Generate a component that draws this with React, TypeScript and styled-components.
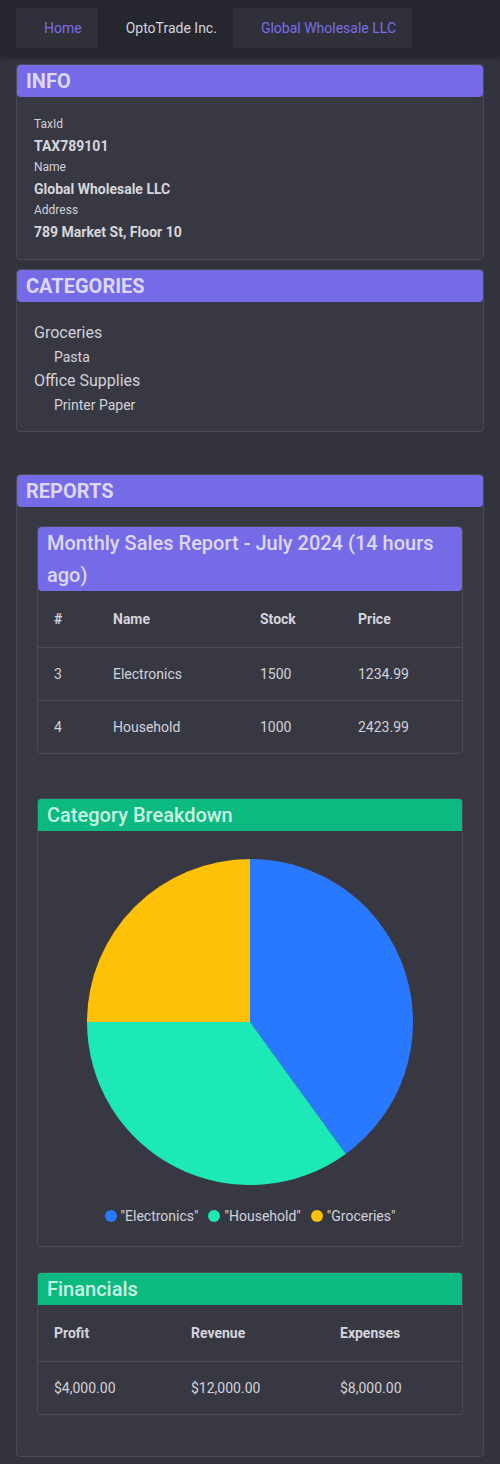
import React from "react";
import styled, { createGlobalStyle } from "styled-components";

const GlobalStyle = createGlobalStyle`
  html {
    overflow-x: hidden;
    background: #33333d;
  }
  body {
    margin: 0;
    background: #33333d;
    color: #d2d2da;
    font-family: Roboto, "Liberation Sans", sans-serif;
    font-size: 14px;
  }
  * { box-sizing: border-box; }
`;

const Nav = styled.nav`
  display: flex;
  align-items: stretch;
  height: 56px;
  padding: 8px 16px;
  background: #26262f;
  box-shadow: 0 2px 5px rgba(0, 0, 0, 0.35);
`;

const NavItem = styled.a<{ $boxed?: boolean; $link?: boolean }>`
  display: flex;
  align-items: center;
  padding: 0 16px 0 28px;
  font-size: 14px;
  text-decoration: none;
  background: ${(p) => (p.$boxed ? "#30303a" : "transparent")};
  color: ${(p) => (p.$link ? "#7a6ee8" : "#d4d4dc")};
`;

const Main = styled.main`
  padding: 8px 0 0;
`;

const Panel = styled.section<{ $gapAfter?: number }>`
  width: calc(100vw - 32px);
  margin: 0 16px ${(p) => p.$gapAfter ?? 9}px;
  background: #383842;
  border: 1px solid #4b4b55;
  border-radius: 4px;
`;

const PanelHeader = styled.h2`
  margin: 0;
  height: 32px;
  line-height: 32px;
  padding: 0 9px;
  background: #766be6;
  border-radius: 4px;
  color: #ddd8fa;
  font-size: 20px;
  font-weight: 700;
`;

const InfoBody = styled.dl`
  margin: 0;
  padding: 18px 17px 15px;
`;

const InfoLabel = styled.dt`
  font-size: 12px;
  line-height: 19px;
  color: #d0d0d8;
`;

const InfoValue = styled.dd`
  margin: 0;
  font-size: 14px;
  line-height: 24px;
  font-weight: 700;
  color: #d6d6de;
`;

const CatBody = styled.ul`
  list-style: none;
  margin: 0;
  padding: 19px 17px 14px;
`;

const CatItem = styled.li<{ $sub?: boolean }>`
  line-height: 24px;
  font-size: ${(p) => (p.$sub ? 14 : 16)}px;
  padding-left: ${(p) => (p.$sub ? 20 : 0)}px;
  color: #d2d2da;
`;

const ReportsBody = styled.div`
  padding: 19px 20px 21px;
`;

const Card = styled.article<{ $gapAfter: number }>`
  border: 1px solid #4b4b55;
  border-radius: 4px;
  background: #383842;
  margin-bottom: ${(p) => p.$gapAfter}px;
  overflow: hidden;
`;

const CardHeader = styled.h3<{ $tone: "purple" | "green" }>`
  margin: 0;
  padding: 0 9px;
  font-size: 20px;
  line-height: 32px;
  font-weight: 500;
  background: ${(p) => (p.$tone === "purple" ? "#766be6" : "#0bb981")};
  color: ${(p) => (p.$tone === "purple" ? "#ddd8fa" : "#c9f2e3")};
  border-radius: ${(p) => (p.$tone === "purple" ? "4px" : "0")};
`;

const Table = styled.table`
  width: 100%;
  border-collapse: collapse;
  table-layout: fixed;
  font-size: 14px;
`;

const Th = styled.th<{ $w?: number }>`
  width: ${(p) => (p.$w ? `${p.$w}px` : "auto")};
  height: 56px;
  padding: 0 16px;
  text-align: left;
  font-weight: 700;
  color: #d4d4dc;
  border-bottom: 1px solid #4b4b55;
`;

const Td = styled.td<{ $last?: boolean }>`
  height: 53px;
  padding: 0 16px;
  color: #d2d2da;
  border-bottom: ${(p) => (p.$last ? "none" : "1px solid #4b4b55")};
`;

const ChartBody = styled.div`
  display: flex;
  flex-direction: column;
  align-items: center;
  padding: 28px 0 20px;
  gap: 21px;
`;

const Legend = styled.ul`
  display: flex;
  gap: 10px;
  list-style: none;
  margin: 0;
  padding: 0;
  height: 20px;
  align-items: center;
`;

const LegendItem = styled.li`
  display: flex;
  align-items: center;
  gap: 4px;
  font-size: 14px;
  color: #d2d2da;
`;

const Dot = styled.span<{ $c: string }>`
  width: 12px;
  height: 12px;
  border-radius: 50%;
  background: ${(p) => p.$c};
`;

const Spacer = styled.div`
  height: 40px;
`;

const rows = [
  { id: 3, name: "Electronics", stock: 1500, price: "1234.99" },
  { id: 4, name: "Household", stock: 1000, price: "2423.99" },
];

const slices = [
  { label: "Electronics", color: "#2979ff", d: "M163,163 L163,0 A163,163 0 0 1 258.8,294.9 Z" },
  { label: "Household", color: "#1de9b6", d: "M163,163 L258.8,294.9 A163,163 0 0 1 0,163 Z" },
  { label: "Groceries", color: "#ffc107", d: "M163,163 L0,163 A163,163 0 0 1 163,0 Z" },
];

export default function App() {
  return (
    <>
      <GlobalStyle />
      <Nav>
        <NavItem $boxed $link href="#">Home</NavItem>
        <NavItem>OptoTrade Inc.</NavItem>
        <NavItem $boxed $link href="#">Global Wholesale LLC</NavItem>
      </Nav>
      <Main>
        <Panel>
          <PanelHeader>INFO</PanelHeader>
          <InfoBody>
            <InfoLabel>TaxId</InfoLabel>
            <InfoValue>TAX789101</InfoValue>
            <InfoLabel>Name</InfoLabel>
            <InfoValue>Global Wholesale LLC</InfoValue>
            <InfoLabel>Address</InfoLabel>
            <InfoValue>789 Market St, Floor 10</InfoValue>
          </InfoBody>
        </Panel>
        <Panel $gapAfter={42}>
          <PanelHeader>CATEGORIES</PanelHeader>
          <CatBody>
            <CatItem>Groceries</CatItem>
            <CatItem $sub>Pasta</CatItem>
            <CatItem>Office Supplies</CatItem>
            <CatItem $sub>Printer Paper</CatItem>
          </CatBody>
        </Panel>
        <Panel>
          <PanelHeader>REPORTS</PanelHeader>
          <ReportsBody>
            <Card $gapAfter={44}>
              <CardHeader $tone="purple">Monthly Sales Report - July 2024 (14 hours ago)</CardHeader>
              <Table>
                <thead>
                  <tr>
                    <Th $w={59}>#</Th>
                    <Th $w={147}>Name</Th>
                    <Th $w={98}>Stock</Th>
                    <Th>Price</Th>
                  </tr>
                </thead>
                <tbody>
                  {rows.map((r, i) => (
                    <tr key={r.id}>
                      <Td $last={i === rows.length - 1}>{r.id}</Td>
                      <Td $last={i === rows.length - 1}>{r.name}</Td>
                      <Td $last={i === rows.length - 1}>{r.stock}</Td>
                      <Td $last={i === rows.length - 1}>{r.price}</Td>
                    </tr>
                  ))}
                </tbody>
              </Table>
            </Card>
            <Card $gapAfter={25}>
              <CardHeader $tone="green">Category Breakdown</CardHeader>
              <ChartBody>
                <svg width="326" height="326" viewBox="0 0 326 326">
                  {slices.map((s) => (
                    <path key={s.label} d={s.d} fill={s.color} />
                  ))}
                </svg>
                <Legend>
                  {slices.map((s) => (
                    <LegendItem key={s.label}>
                      <Dot $c={s.color} />"{s.label}"
                    </LegendItem>
                  ))}
                </Legend>
              </ChartBody>
            </Card>
            <Card $gapAfter={20}>
              <CardHeader $tone="green">Financials</CardHeader>
              <Table>
                <thead>
                  <tr>
                    <Th $w={137}>Profit</Th>
                    <Th $w={149}>Revenue</Th>
                    <Th>Expenses</Th>
                  </tr>
                </thead>
                <tbody>
                  <tr>
                    <Td $last>$4,000.00</Td>
                    <Td $last>$12,000.00</Td>
                    <Td $last>$8,000.00</Td>
                  </tr>
                </tbody>
              </Table>
            </Card>
          </ReportsBody>
        </Panel>
        <Spacer />
      </Main>
    </>
  );
}
